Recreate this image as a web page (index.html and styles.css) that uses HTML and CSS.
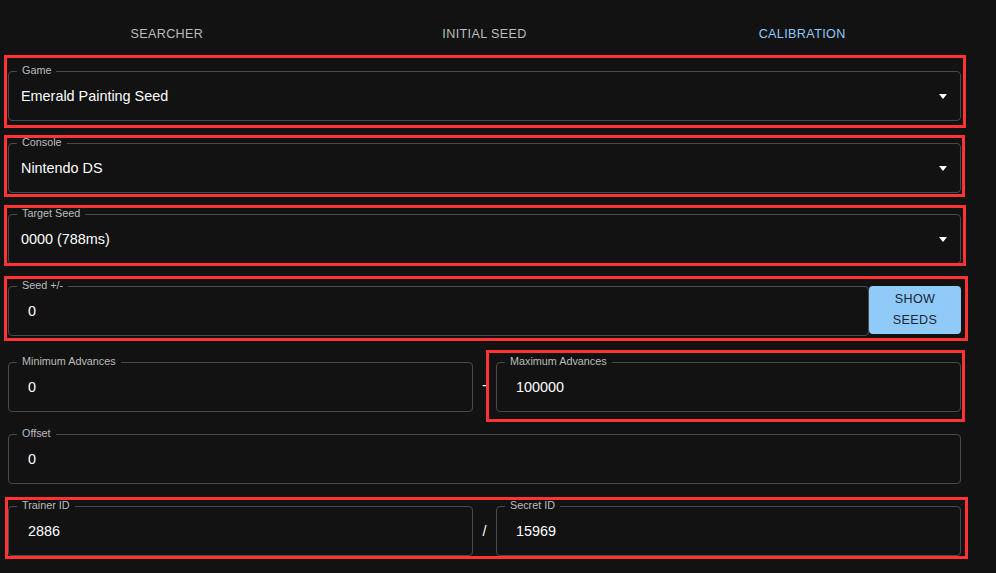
FILE: index.html
```html
<!DOCTYPE html>
<html lang="en">
<head>
<meta charset="utf-8">
<title>Calibration</title>
<link rel="stylesheet" href="styles.css">
</head>
<body>
<div class="page">
  <nav class="tabs">
    <div class="tab">SEARCHER</div>
    <div class="tab">INITIAL SEED</div>
    <div class="tab active">CALIBRATION</div>
  </nav>

  <div class="row first">
    <div class="field select">
      <span class="label">Game</span>
      <span class="value">Emerald Painting Seed</span>
      <span class="caret"></span>
    </div>
  </div>

  <div class="row">
    <div class="field select">
      <span class="label">Console</span>
      <span class="value">Nintendo DS</span>
      <span class="caret"></span>
    </div>
  </div>

  <div class="row tight">
    <div class="field select">
      <span class="label">Target Seed</span>
      <span class="value">0000 (788ms)</span>
      <span class="caret"></span>
    </div>
  </div>

  <div class="row">
    <div class="field input">
      <span class="label">Seed +/-</span>
      <span class="value">0</span>
    </div>
    <button class="btn">SHOW SEEDS</button>
  </div>

  <div class="row wide-gap">
    <div class="field input">
      <span class="label">Minimum Advances</span>
      <span class="value">0</span>
    </div>
    <div class="sep">-</div>
    <div class="field input">
      <span class="label">Maximum Advances</span>
      <span class="value">100000</span>
    </div>
  </div>

  <div class="row">
    <div class="field input">
      <span class="label">Offset</span>
      <span class="value">0</span>
    </div>
  </div>

  <div class="row">
    <div class="field input">
      <span class="label">Trainer ID</span>
      <span class="value">2886</span>
    </div>
    <div class="sep slash">/</div>
    <div class="field input">
      <span class="label">Secret ID</span>
      <span class="value">15969</span>
    </div>
  </div>

  <div class="row">
    <div class="field select">
      <span class="label">Method</span>
      <span class="value">Method 1</span>
      <span class="caret"></span>
    </div>
  </div>
</div>

<div class="annotations">
  <div class="hl hl-game"></div>
  <div class="hl hl-console"></div>
  <div class="hl hl-target"></div>
  <div class="hl hl-seed"></div>
  <div class="hl hl-max"></div>
  <div class="hl hl-ids"></div>
</div>
</body>
</html>
```

FILE: styles.css
```css
html, body {
  margin: 0;
  padding: 0;
  background: #121212;
  overflow: hidden;
}

body {
  position: relative;
  font-family: "Liberation Sans", Arial, sans-serif;
  color: #ffffff;
  height: 573px;
}

.page {
  width: 953px;
  padding: 10px 0 0 8px;
}

.tabs {
  display: grid;
  grid-template-columns: repeat(3, 1fr);
  height: 48px;
}

.tab {
  display: flex;
  align-items: center;
  justify-content: center;
  font-size: 12.6px;
  letter-spacing: 0.36px;
  color: #bcbcbc;
}

.tab.active {
  color: #90caf9;
}

.row {
  display: flex;
  align-items: flex-start;
  margin-top: 22px;
}

.row.first {
  margin-top: 13px;
}

.row.tight {
  margin-top: 21px;
}

.row.wide-gap {
  margin-top: 26px;
}

.field {
  position: relative;
  flex: 1;
  height: 50px;
  box-sizing: border-box;
  border: 1px solid #4a4a4a;
  border-radius: 4px;
  display: flex;
  align-items: center;
}

.label {
  position: absolute;
  left: 8px;
  top: -8px;
  padding: 0 5px;
  background: #121212;
  font-size: 10.8px;
  line-height: 13px;
  color: #bcbcbc;
}

.value {
  font-size: 14.4px;
  color: #ffffff;
}

.select .value {
  padding-left: 12px;
}

.input .value {
  padding-left: 19px;
}

.caret {
  position: absolute;
  right: 13px;
  top: 22px;
  width: 0;
  height: 0;
  border-left: 4px solid transparent;
  border-right: 4px solid transparent;
  border-top: 5px solid #ffffff;
}

.btn {
  width: 92px;
  height: 48px;
  flex: none;
  border: none;
  border-radius: 4px;
  background: #90caf9;
  color: #1a2633;
  font-family: "Liberation Sans", Arial, sans-serif;
  font-size: 12.6px;
  letter-spacing: 0.36px;
  line-height: 21px;
  padding: 0 14px;
  text-align: center;
}

.sep {
  width: 23px;
  flex: none;
  height: 50px;
  display: flex;
  align-items: center;
  justify-content: center;
  font-size: 14.4px;
  color: #ffffff;
  padding-bottom: 4px;
  box-sizing: border-box;
}

.sep.slash {
  padding-bottom: 0;
}

.annotations {
  position: absolute;
  inset: 0;
  pointer-events: none;
}

.hl {
  position: absolute;
  box-sizing: border-box;
  border: 3px solid #ff3333;
}

.hl-game { left: 4px; top: 55px; width: 962px; height: 73px; }
.hl-console { left: 4px; top: 135px; width: 961px; height: 62px; }
.hl-target { left: 4px; top: 205px; width: 962px; height: 61px; }
.hl-seed { left: 4px; top: 276px; width: 964px; height: 65px; }
.hl-max { left: 486px; top: 350px; width: 479px; height: 72px; }
.hl-ids { left: 5px; top: 497px; width: 963px; height: 62px; }
```
